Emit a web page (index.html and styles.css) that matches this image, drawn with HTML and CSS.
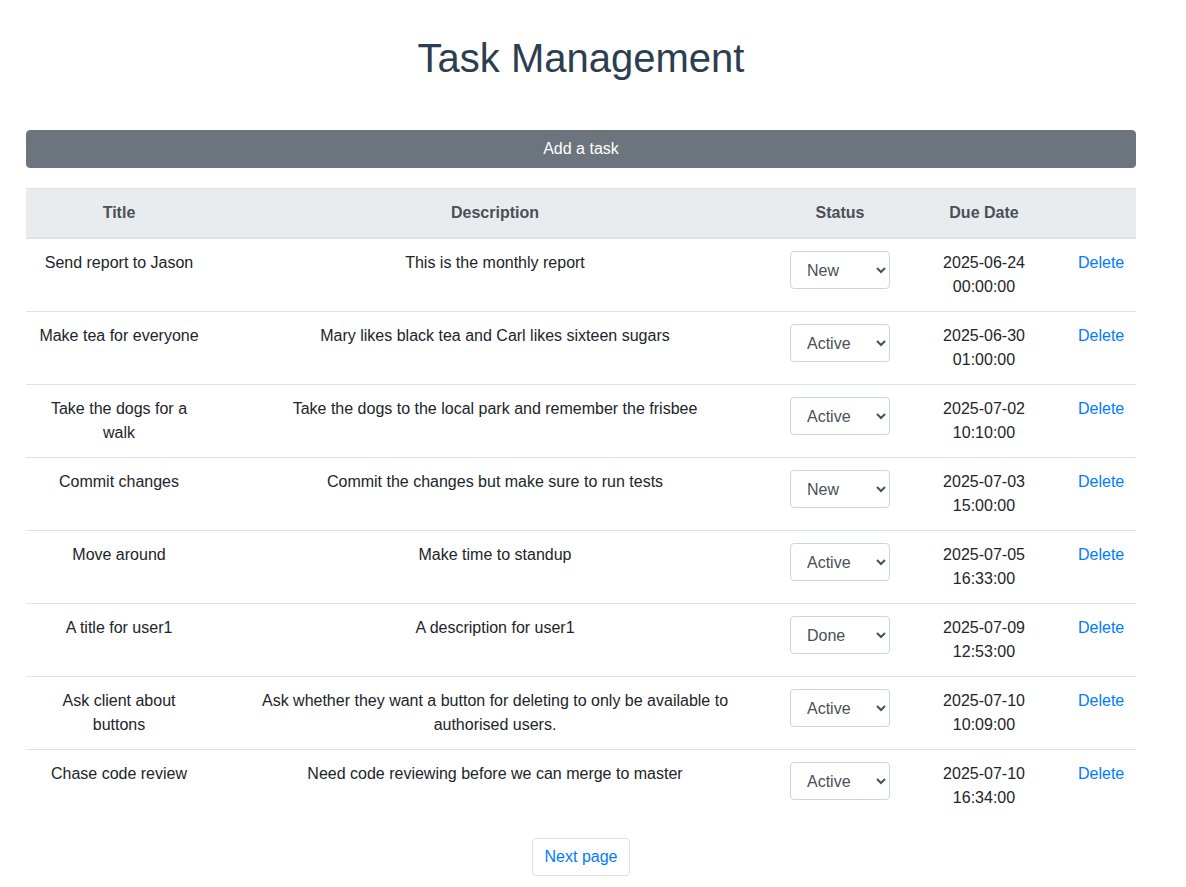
FILE: index.html
```html
<!DOCTYPE html>
<html lang="en">
<head>
<meta charset="utf-8">
<title>Task Management</title>
<link rel="stylesheet" href="styles.css">
</head>
<body>
<div class="container">
  <h1 class="page-title">Task Management</h1>
  <button class="btn-add" type="button">Add a task</button>
  <table class="task-table">
    <colgroup>
      <col class="col-title">
      <col class="col-desc">
      <col class="col-status">
      <col class="col-due">
      <col class="col-action">
    </colgroup>
    <thead>
      <tr>
        <th>Title</th>
        <th>Description</th>
        <th>Status</th>
        <th>Due Date</th>
        <th></th>
      </tr>
    </thead>
    <tbody>
      <tr>
        <td>Send report to Jason</td>
        <td>This is the monthly report</td>
        <td><select class="status-select"><option selected>New</option><option>Active</option><option>Done</option></select></td>
        <td>2025-06-24 00:00:00</td>
        <td><a class="link-delete" href="#">Delete</a></td>
      </tr>
      <tr>
        <td>Make tea for everyone</td>
        <td>Mary likes black tea and Carl likes sixteen sugars</td>
        <td><select class="status-select"><option>New</option><option selected>Active</option><option>Done</option></select></td>
        <td>2025-06-30 01:00:00</td>
        <td><a class="link-delete" href="#">Delete</a></td>
      </tr>
      <tr>
        <td>Take the dogs for a walk</td>
        <td>Take the dogs to the local park and remember the frisbee</td>
        <td><select class="status-select"><option>New</option><option selected>Active</option><option>Done</option></select></td>
        <td>2025-07-02 10:10:00</td>
        <td><a class="link-delete" href="#">Delete</a></td>
      </tr>
      <tr>
        <td>Commit changes</td>
        <td>Commit the changes but make sure to run tests</td>
        <td><select class="status-select"><option selected>New</option><option>Active</option><option>Done</option></select></td>
        <td>2025-07-03 15:00:00</td>
        <td><a class="link-delete" href="#">Delete</a></td>
      </tr>
      <tr>
        <td>Move around</td>
        <td>Make time to standup</td>
        <td><select class="status-select"><option>New</option><option selected>Active</option><option>Done</option></select></td>
        <td>2025-07-05 16:33:00</td>
        <td><a class="link-delete" href="#">Delete</a></td>
      </tr>
      <tr>
        <td>A title for user1</td>
        <td>A description for user1</td>
        <td><select class="status-select"><option>New</option><option>Active</option><option selected>Done</option></select></td>
        <td>2025-07-09 12:53:00</td>
        <td><a class="link-delete" href="#">Delete</a></td>
      </tr>
      <tr>
        <td>Ask client about buttons</td>
        <td>Ask whether they want a button for deleting to only be available to authorised users.</td>
        <td><select class="status-select"><option>New</option><option selected>Active</option><option>Done</option></select></td>
        <td>2025-07-10 10:09:00</td>
        <td><a class="link-delete" href="#">Delete</a></td>
      </tr>
      <tr>
        <td>Chase code review</td>
        <td>Need code reviewing before we can merge to master</td>
        <td><select class="status-select"><option>New</option><option selected>Active</option><option>Done</option></select></td>
        <td>2025-07-10 16:34:00</td>
        <td><a class="link-delete" href="#">Delete</a></td>
      </tr>
    </tbody>
  </table>
  <div class="pager">
    <button class="btn-next" type="button">Next page</button>
  </div>
</div>
</body>
</html>
```

FILE: styles.css
```css
* {
  box-sizing: border-box;
}

html, body {
  margin: 0;
  padding: 0;
  background: #fff;
}

body {
  font-family: "Liberation Sans", Arial, sans-serif;
  font-size: 16px;
  line-height: 24px;
  color: #212529;
}

.container {
  width: 1110px;
  margin-left: 26px;
}

.page-title {
  margin: 34px 0 48px;
  font-size: 40px;
  line-height: 48px;
  font-weight: normal;
  text-align: center;
  color: #2c3e50;
}

.btn-add {
  display: block;
  width: 100%;
  height: 38px;
  padding: 6px 12px;
  border: 1px solid #6c757d;
  border-radius: 4px;
  background: #6c757d;
  color: #fff;
  font-family: inherit;
  font-size: 16px;
  line-height: 24px;
  cursor: pointer;
}

.task-table {
  width: 100%;
  margin-top: 20px;
  margin-bottom: 16px;
  border-collapse: collapse;
  table-layout: fixed;
}

.col-title { width: 186px; }
.col-desc { width: 566px; }
.col-status { width: 124px; }
.col-due { width: 164px; }
.col-action { width: 70px; }

.task-table th,
.task-table td {
  padding: 12px;
  text-align: center;
  vertical-align: top;
  border-top: 1px solid #dee2e6;
}

.task-table thead th {
  background: #e9ecef;
  color: #495057;
  font-weight: bold;
  border-bottom: 2px solid #dee2e6;
  vertical-align: bottom;
}

.task-table thead + tbody tr:first-child td {
  border-top: 0;
}

.status-select {
  width: 100px;
  height: 38px;
  padding: 6px 8px 6px 12px;
  border: 1px solid #ced4da;
  border-radius: 4px;
  background: #fff;
  color: #495057;
  font-family: inherit;
  font-size: 16px;
  line-height: 24px;
}

.link-delete {
  color: #007bff;
  text-decoration: none;
}

.pager {
  display: flex;
  justify-content: center;
}

.btn-next {
  height: 38px;
  padding: 6px 12px;
  border: 1px solid #dee2e6;
  border-radius: 4px;
  background: #fff;
  color: #007bff;
  font-family: inherit;
  font-size: 16px;
  line-height: 24px;
  cursor: pointer;
}
```
